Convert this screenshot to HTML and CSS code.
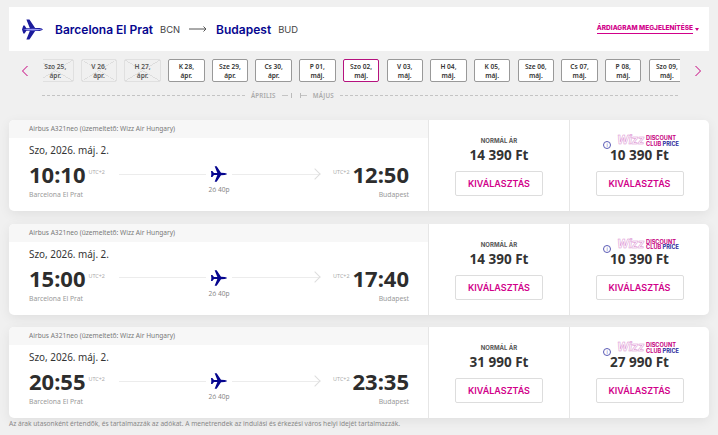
FILE: index.html
```html
<!DOCTYPE html>
<html lang="hu">

<head>
    <meta charset="UTF-8">
    <link rel="stylesheet" href="styles.css">
    <title>Járatok</title>
</head>

<body>

    <header class="route-bar">
        <svg class="route-plane" viewBox="0 0 24 24" width="21" height="21">
            <path d="M0 12 L1.5 7.5 L3 7.5 L5 10.5 L9 10.5 L5 0.5 L8.5 0.5 L15 10.2 L20 10.4 Q23 11 24 12 Q23 13 20 13.6 L15 13.8 L8.5 23.5 L5 23.5 L9 13.5 L5 13.5 L3 16.5 L1.5 16.5 Z" fill="#1b1b9c"/>
            <path d="M1 12 Q12 10 24 12 Q12 14 1 12 Z" fill="#9a9af5"/>
        </svg>
        <span class="city">Barcelona El Prat</span>
        <span class="code">BCN</span>
        <svg class="route-arrow" viewBox="0 0 18 8" width="18" height="8">
            <path d="M0 4 H17 M14.5 1.5 L17 4 L14.5 6.5" fill="none" stroke="#555" stroke-width="1"/>
        </svg>
        <span class="city">Budapest</span>
        <span class="code">BUD</span>
        <a class="chart-link" href="#"><span>ÁRDIAGRAM MEGJELENÍTÉSE</span><i class="caret"></i></a>
    </header>

    <nav class="dates">
        <svg class="chev" viewBox="0 0 8 12" width="8" height="12"><path d="M6.5 1 L1.5 6 L6.5 11" fill="none" stroke="#c6007e" stroke-width="1"/></svg>
        <div class="date-strip">
            <div class="date off">Szo 25,<br>ápr.</div>
            <div class="date off">V 26,<br>ápr.</div>
            <div class="date off">H 27,<br>ápr.</div>
            <div class="date">K 28,<br>ápr.</div>
            <div class="date">Sze 29,<br>ápr.</div>
            <div class="date">Cs 30,<br>ápr.</div>
            <div class="date">P 01,<br>máj.</div>
            <div class="date selected">Szo 02,<br>máj.</div>
            <div class="date">V 03,<br>máj.</div>
            <div class="date">H 04,<br>máj.</div>
            <div class="date">K 05,<br>máj.</div>
            <div class="date">Sze 06,<br>máj.</div>
            <div class="date">Cs 07,<br>máj.</div>
            <div class="date">P 08,<br>máj.</div>
            <div class="date">Szo 09,<br>máj.</div>
        </div>
        <svg class="chev" viewBox="0 0 8 12" width="8" height="12"><path d="M1.5 1 L6.5 6 L1.5 11" fill="none" stroke="#c6007e" stroke-width="1"/></svg>
    </nav>

    <div class="months">
        <span class="dash grow-a"></span>
        <span class="month">ÁPRILIS</span>
        <span class="dash short"></span>
        <span class="tick"></span>
        <span class="tick"></span>
        <span class="dash short"></span>
        <span class="month">MÁJUS</span>
        <span class="dash grow-b"></span>
    </div>

    <main class="flights">
        <article class="flight">
            <div class="flight-main">
                <div class="aircraft">Airbus A321neo (üzemeltető: Wizz Air Hungary)</div>
                <div class="flight-body">
                    <div class="flight-date">Szo, 2026. máj. 2.</div>
                    <div class="times">
                        <span class="time">10:10</span>
                        <span class="utc">UTC+2</span>
                        <div class="track">
                            <span class="line"></span>
                            <svg class="plane" viewBox="0 0 24 24" width="16" height="16"><path d="M0.5 12 L0 7.5 L2 7.5 L4.5 10.5 L9.5 10.5 L5.5 0.5 L8.5 0.5 L15 10.3 L20.5 10.4 Q24 11 24 12 Q24 13 20.5 13.6 L15 13.7 L8.5 23.5 L5.5 23.5 L9.5 13.5 L4.5 13.5 L2 16.5 L0 16.5 Z" fill="#06068f"/></svg>
                            <span class="line arrowed"></span>
                            <span class="duration">2ó 40p</span>
                        </div>
                        <span class="utc">UTC+2</span>
                        <span class="time">12:50</span>
                    </div>
                    <div class="places"><span>Barcelona El Prat</span><span>Budapest</span></div>
                </div>
            </div>
            <div class="fare">
                <div class="fare-label">NORMÁL ÁR</div>
                <div class="price">14 390 Ft</div>
                <button class="select">KIVÁLASZTÁS</button>
            </div>
            <div class="fare">
                <div class="club"><span class="info">i</span><span class="wizz">Wizz</span><span class="club-text"><b>DISCOUNT</b><b>CLUB <em>PRICE</em></b></span></div>
                <div class="price">10 390 Ft</div>
                <button class="select">KIVÁLASZTÁS</button>
            </div>
        </article>

        <article class="flight">
            <div class="flight-main">
                <div class="aircraft">Airbus A321neo (üzemeltető: Wizz Air Hungary)</div>
                <div class="flight-body">
                    <div class="flight-date">Szo, 2026. máj. 2.</div>
                    <div class="times">
                        <span class="time">15:00</span>
                        <span class="utc">UTC+2</span>
                        <div class="track">
                            <span class="line"></span>
                            <svg class="plane" viewBox="0 0 24 24" width="16" height="16"><path d="M0.5 12 L0 7.5 L2 7.5 L4.5 10.5 L9.5 10.5 L5.5 0.5 L8.5 0.5 L15 10.3 L20.5 10.4 Q24 11 24 12 Q24 13 20.5 13.6 L15 13.7 L8.5 23.5 L5.5 23.5 L9.5 13.5 L4.5 13.5 L2 16.5 L0 16.5 Z" fill="#06068f"/></svg>
                            <span class="line arrowed"></span>
                            <span class="duration">2ó 40p</span>
                        </div>
                        <span class="utc">UTC+2</span>
                        <span class="time">17:40</span>
                    </div>
                    <div class="places"><span>Barcelona El Prat</span><span>Budapest</span></div>
                </div>
            </div>
            <div class="fare">
                <div class="fare-label">NORMÁL ÁR</div>
                <div class="price">14 390 Ft</div>
                <button class="select">KIVÁLASZTÁS</button>
            </div>
            <div class="fare">
                <div class="club"><span class="info">i</span><span class="wizz">Wizz</span><span class="club-text"><b>DISCOUNT</b><b>CLUB <em>PRICE</em></b></span></div>
                <div class="price">10 390 Ft</div>
                <button class="select">KIVÁLASZTÁS</button>
            </div>
        </article>

        <article class="flight">
            <div class="flight-main">
                <div class="aircraft">Airbus A321neo (üzemeltető: Wizz Air Hungary)</div>
                <div class="flight-body">
                    <div class="flight-date">Szo, 2026. máj. 2.</div>
                    <div class="times">
                        <span class="time">20:55</span>
                        <span class="utc">UTC+2</span>
                        <div class="track">
                            <span class="line"></span>
                            <svg class="plane" viewBox="0 0 24 24" width="16" height="16"><path d="M0.5 12 L0 7.5 L2 7.5 L4.5 10.5 L9.5 10.5 L5.5 0.5 L8.5 0.5 L15 10.3 L20.5 10.4 Q24 11 24 12 Q24 13 20.5 13.6 L15 13.7 L8.5 23.5 L5.5 23.5 L9.5 13.5 L4.5 13.5 L2 16.5 L0 16.5 Z" fill="#06068f"/></svg>
                            <span class="line arrowed"></span>
                            <span class="duration">2ó 40p</span>
                        </div>
                        <span class="utc">UTC+2</span>
                        <span class="time">23:35</span>
                    </div>
                    <div class="places"><span>Barcelona El Prat</span><span>Budapest</span></div>
                </div>
            </div>
            <div class="fare">
                <div class="fare-label">NORMÁL ÁR</div>
                <div class="price">31 990 Ft</div>
                <button class="select">KIVÁLASZTÁS</button>
            </div>
            <div class="fare">
                <div class="club"><span class="info">i</span><span class="wizz">Wizz</span><span class="club-text"><b>DISCOUNT</b><b>CLUB <em>PRICE</em></b></span></div>
                <div class="price">27 990 Ft</div>
                <button class="select">KIVÁLASZTÁS</button>
            </div>
        </article>
    </main>

    <p class="note">Az árak utasonként értendők, és tartalmazzák az adókat. A menetrendek az indulási és érkezési város helyi idejét tartalmazzák.</p>

</body>

</html>
```

FILE: styles.css
```css
html,
body {
    height: 435px;
    overflow: hidden;
}

body {
    font-family: "Noto Sans", "Open Sans", sans-serif;
    margin: 0;
    padding: 7px 9px 0;
    background-color: #f0f0f0;
    color: #333;
}

.route-bar {
    display: flex;
    align-items: center;
    height: 44px;
    padding: 0 10px 0 13px;
    background-color: #fff;
}

.route-plane {
    margin-right: 12px;
}

.city {
    font-family: Inter, sans-serif;
    font-size: 12px;
    font-weight: 600;
    color: #06068f;
}

.code {
    font-family: Inter, sans-serif;
    font-size: 9.4px;
    color: #444;
    margin-left: 7px;
}

.route-arrow {
    margin: 0 9px 0 9px;
}

.chart-link {
    display: flex;
    align-items: center;
    margin-left: auto;
    font-family: Inter, sans-serif;
    font-size: 6.5px;
    font-weight: 800;
    color: #d1008a;
    text-decoration: none;
}

.chart-link span {
    border-bottom: 1px solid #d1008a;
    padding-bottom: 1px;
}

.caret {
    width: 0;
    height: 0;
    margin-left: 2px;
    border: 2.5px solid transparent;
    border-top: 3px solid #d1008a;
    border-bottom: 0;
}

.dates {
    display: flex;
    align-items: center;
    justify-content: space-between;
    margin-top: 7px;
    padding: 0 7px 0 12px;
}

.date-strip {
    display: flex;
    gap: 7.2px;
    width: 637px;
    overflow: hidden;
    padding: 1px 0;
}

.date {
    flex: 0 0 36.5px;
    box-sizing: border-box;
    height: 23px;
    border: 1px solid #999;
    border-radius: 2px;
    background-color: #fff;
    font-size: 6.6px;
    font-weight: 600;
    line-height: 9px;
    text-align: center;
    padding-top: 2px;
    white-space: nowrap;
}

.date:first-child {
    margin-left: -6px;
}

.date.off {
    border-color: #e0e0e0;
    color: #555;
    background: linear-gradient(to top right, transparent 49%, #ddd 49%, #ddd 51%, transparent 51%),
        linear-gradient(to bottom right, transparent 49%, #ddd 49%, #ddd 51%, transparent 51%);
}

.date.selected {
    border-color: #b5127e;
}

.months {
    display: flex;
    align-items: center;
    gap: 6px;
    height: 9px;
    margin: 8px 31px 0 33px;
}

.dash {
    border-top: 1px dashed #c4c4c4;
}

.grow-a {
    flex: 0 0 203px;
}

.grow-b {
    flex: 1;
}

.short {
    flex: 0 0 6px;
}

.tick {
    width: 1px;
    height: 5px;
    margin: 0 -2px 0 -3px;
    background-color: #bbb;
}

.tick + .tick {
    margin: 0 -6px 0 4px;
}

.month {
    font-size: 6.2px;
    letter-spacing: 0.2px;
    color: #aaa;
    font-weight: 600;
}

.flights {
    display: flex;
    flex-direction: column;
    gap: 12.5px;
    margin-top: 20px;
}

.flight {
    display: grid;
    grid-template-columns: 419px 1fr 140px;
    height: 91px;
    border-radius: 5px;
    background-color: #fff;
    box-shadow: 0 3px 12px rgba(0, 0, 0, 0.07);
    overflow: hidden;
}

.aircraft {
    height: 18px;
    padding-left: 20px;
    background-color: #f7f7f7;
    font-size: 6.6px;
    line-height: 18px;
    color: #777;
}

.flight-body {
    padding: 6px 19px 0 20px;
}

.flight-date {
    font-size: 9.9px;
    line-height: 13px;
    color: #333;
}

.times {
    display: flex;
    align-items: center;
    height: 22px;
    margin-top: 6px;
}

.time {
    font-size: 22px;
    font-weight: 700;
    line-height: 22px;
    color: #2d2d2d;
}

.utc {
    font-size: 5.4px;
    color: #aaa;
    margin: -4px 3px 0;
}

.track {
    position: relative;
    flex: 1;
    display: flex;
    align-items: center;
    gap: 5px;
    margin: 0 11px;
}

.line {
    flex: 1;
    height: 1px;
    background-color: #ececec;
}

.arrowed {
    position: relative;
}

.arrowed::after {
    content: "";
    position: absolute;
    right: 0;
    top: -4px;
    width: 7px;
    height: 7px;
    border-top: 1px solid #ddd;
    border-right: 1px solid #ddd;
    transform: rotate(45deg);
}

.duration {
    position: absolute;
    top: 19px;
    left: 0;
    right: 0;
    font-size: 6.6px;
    text-align: center;
    color: #888;
}

.places {
    display: flex;
    justify-content: space-between;
    margin-top: 5px;
    font-size: 6.8px;
    color: #999;
}

.fare {
    display: flex;
    flex-direction: column;
    align-items: center;
    border-left: 1px solid #e6e6e6;
    padding-top: 16px;
}

.fare-label {
    height: 12px;
    font-family: Inter, sans-serif;
    font-size: 6px;
    font-weight: 700;
    line-height: 10px;
    color: #555;
}

.price {
    font-size: 13.5px;
    font-weight: 700;
    line-height: 15px;
    color: #333;
}

.select {
    width: 88px;
    height: 25px;
    margin-top: 8px;
    border: 1px solid #ddd;
    border-radius: 2px;
    background-color: #fff;
    font-family: Inter, sans-serif;
    font-size: 9px;
    font-weight: 600;
    color: #d1008a;
    padding: 0;
}

.club {
    display: flex;
    align-items: flex-start;
    height: 13px;
    margin-top: -1px;
    margin-left: 3px;
}

.info {
    width: 6px;
    height: 6px;
    margin-right: 6px;
    margin-top: 6px;
    border: 1px solid #5b5bb5;
    border-radius: 50%;
    font-size: 5px;
    line-height: 6px;
    text-align: center;
    color: #5b5bb5;
}

.wizz {
    font-family: Inter, sans-serif;
    font-size: 11.5px;
    font-style: italic;
    font-weight: 700;
    line-height: 11px;
    letter-spacing: -0.3px;
    color: #fff;
    -webkit-text-stroke: 0.5px #d98bd0;
}

.club-text {
    display: flex;
    flex-direction: column;
    margin-left: 2px;
    padding-top: 1px;
    font-family: Inter, sans-serif;
    font-size: 5.6px;
    line-height: 5.5px;
    white-space: nowrap;
    color: #c6007e;
}

.club-text em {
    font-style: normal;
    color: #2a2a9c;
}

.note {
    margin: 1px 0 0;
    font-size: 6.6px;
    line-height: 9px;
    color: #888;
}
```
